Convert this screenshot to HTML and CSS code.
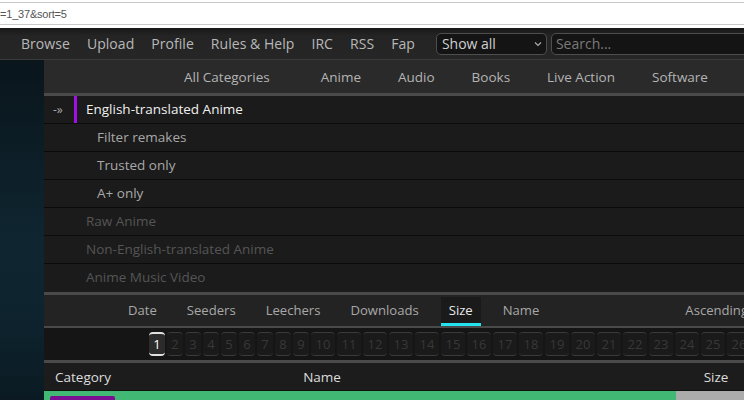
FILE: index.html
```html
<!DOCTYPE html>
<html>
<head>
<meta charset="utf-8">
<link rel="stylesheet" href="styles.css">
</head>
<body>
<div class="urlbar"><span class="url">=1_37&amp;sort=5</span></div>
<nav class="topnav">
  <a>Browse</a><a>Upload</a><a>Profile</a><a>Rules &amp; Help</a><a>IRC</a><a>RSS</a><a>Fap</a>
  <div class="select"><span>Show all</span>
    <svg class="chev" width="8" height="6" viewBox="0 0 8 6"><path d="M1 1.5 L4 4.5 L7 1.5" fill="none" stroke="#aaa" stroke-width="1.2"/></svg>
  </div>
  <div class="search">Search...</div>
</nav>
<div class="page">
  <aside class="side"></aside>
  <main class="panel">
    <div class="cats">
      <a class="allcat">All Categories</a><a>Anime</a><a>Audio</a><a>Books</a><a>Live Action</a><a>Software</a>
    </div>
    <ul class="subcats">
      <li class="active"><span class="arrow">-»</span><span class="bar"></span><span>English-translated Anime</span></li>
      <li class="filter">Filter remakes</li>
      <li class="filter">Trusted only</li>
      <li class="filter">A+ only</li>
      <li class="off">Raw Anime</li>
      <li class="off">Non-English-translated Anime</li>
      <li class="off">Anime Music Video</li>
    </ul>
    <div class="sortbar">
      <a>Date</a><a>Seeders</a><a>Leechers</a><a>Downloads</a><a class="cur">Size</a><a>Name</a><a class="asc">Ascending</a>
    </div>
    <div class="pager">
      <span class="pg on">1</span><span class="pg">2</span><span class="pg">3</span><span class="pg">4</span><span class="pg">5</span><span class="pg">6</span><span class="pg">7</span><span class="pg">8</span><span class="pg">9</span><span class="pg w">10</span><span class="pg w">11</span><span class="pg w">12</span><span class="pg w">13</span><span class="pg w">14</span><span class="pg w">15</span><span class="pg w">16</span><span class="pg w">17</span><span class="pg w">18</span><span class="pg w">19</span><span class="pg w">20</span><span class="pg w">21</span><span class="pg w">22</span><span class="pg w">23</span><span class="pg w">24</span><span class="pg w">25</span><span class="pg w">26</span>
    </div>
    <div class="thead">
      <span class="c-cat">Category</span><span class="c-name">Name</span><span class="c-link"></span><span class="c-size">Size</span>
    </div>
    <div class="trow">
      <span class="c-cat"><span class="badge"></span></span><span class="c-name"></span><span class="c-link"></span><span class="c-size gray"></span>
    </div>
  </main>
</div>
</body>
</html>
```
FILE: styles.css
```css
* { box-sizing: border-box; }
html, body { margin: 0; padding: 0; }
body {
  width: 744px;
  height: 400px;
  overflow: hidden;
  background: #0d1c25;
  font-family: "Open Sans", "Noto Sans", sans-serif;
}
a { cursor: pointer; }

.urlbar {
  height: 28px;
  background: #fff;
  padding-top: 2px;
}
.url {
  display: flex;
  align-items: center;
  height: 23px;
  border-top: 1px solid #c8c8c8;
  border-bottom: 1px solid #c8c8c8;
  font-size: 11px;
  color: #555;
  font-family: "Liberation Sans", sans-serif;
  padding-left: 0;
  letter-spacing: -0.2px;
}

.topnav {
  height: 32px;
  background: linear-gradient(#181818, #242424 25%, #262626);
  border-bottom: 1px solid #3a3a3a;
  display: flex;
  align-items: center;
  padding-left: 21px;
  gap: 17px;
  white-space: nowrap;
}
.topnav a {
  color: #b8b8b8;
  font-size: 14px;
  letter-spacing: 0.05px;
}
.select {
  margin-left: 4px;
  width: 111px;
  height: 22px;
  border: 1px solid #4e4e4e;
  border-radius: 5px;
  background: #141414;
  display: flex;
  align-items: center;
  justify-content: space-between;
  padding: 0 4px 0 5px;
  color: #d0d0d0;
  font-size: 14px;
}
.search {
  margin-left: -13px;
  flex: 1;
  margin-right: -20px;
  height: 22px;
  border: 1px solid #4e4e4e;
  border-radius: 5px;
  background: #141414;
  color: #7a7a7a;
  font-size: 14px;
  display: flex;
  align-items: center;
  padding-left: 4px;
}

.page {
  display: flex;
  height: 340px;
}
.side {
  width: 44px;
  flex: none;
  background: linear-gradient(#0a151c, #0f2631 55%, #0d222c 80%, #0b1a22);
}
.panel {
  width: 720px;
  flex: none;
  background: #1b1b1b;
}

.cats {
  height: 36px;
  background: #2a2a2a;
  border-bottom: 3px solid #4a4a4a;
  display: flex;
  align-items: center;
  padding-left: 140px;
  gap: 37px;
  white-space: nowrap;
}
.cats a {
  color: #b4b4b4;
  font-size: 13.5px;
}
.cats .allcat { margin-right: 14px; }

.subcats {
  list-style: none;
  margin: 0;
  padding: 0;
}
.subcats li {
  height: 28px;
  border-bottom: 1px solid #0b0b0b;
  display: flex;
  align-items: center;
  font-size: 13.5px;
  padding-left: 42px;
  padding-bottom: 1px;
  background: #1b1b1b;
}
.subcats .active {
  padding-left: 9px;
  color: #f0f0f0;
}
.arrow {
  color: #aaa;
  font-size: 12px;
  width: 21px;
}
.bar {
  width: 3px;
  height: 27px;
  margin-bottom: -1px;
  background: #a20ee6;
  margin-right: 9px;
}
.subcats .filter { padding-left: 53px; color: #a8a8a8; }
.subcats .off { color: #555; }
.subcats li:last-child { border-bottom: 3px solid #4a4a4a; height: 31px; padding-bottom: 3px; }

.sortbar {
  height: 33px;
  background: #232323;
  border-bottom: 2px solid #4a4a4a;
  display: flex;
  align-items: stretch;
  padding-left: 69px;
  padding-right: 16px;
  white-space: nowrap;
}
.sortbar a {
  color: #a8a8a8;
  font-size: 13.1px;
  display: flex;
  align-items: center;
  padding: 0 15px;
  margin-top: 2px;
  border-bottom: 3px solid transparent;
}
.sortbar a.cur {
  background: #1a1a1a;
  color: #e8e8e8;
  border-bottom-color: #25e3ee;
  padding: 0 8px;
  margin: 2px 7px 0;
}
.sortbar a.asc { margin-left: auto; padding-right: 0; }

.pager {
  height: 35px;
  background: #151515;
  border-bottom: 3px solid #4a4a4a;
  display: flex;
  align-items: center;
  padding-left: 105px;
  gap: 2px;
  white-space: nowrap;
}
.pg {
  flex: none;
  width: 16px;
  height: 24px;
  border-radius: 4px;
  border-top: 1px solid #3a3a3a;
  border-bottom: 1px solid #3a3a3a;
  background: #1a1a1a;
  color: #383838;
  font-size: 13px;
  display: flex;
  align-items: center;
  justify-content: center;
}
.pg.w { width: 24px; }
.pg.on {
  background: #2b2b2b;
  color: #fff;
  border-top: 2px solid #e0e0e0;
  border-bottom: 2px solid #e0e0e0;
}

.thead, .trow {
  display: grid;
  grid-template-columns: 77px 402px 153px 88px;
}
.thead {
  height: 28px;
  background: #1c1c1c;
  border-bottom: 1px solid #111;
  align-items: center;
  color: #dcdcdc;
  font-size: 13.5px;
}
.thead .c-cat { padding-left: 11px; }
.thead .c-name, .thead .c-size { text-align: center; }
.thead .c-size { padding-right: 8px; }
.trow {
  height: 20px;
  background: #41b975;
}
.trow .gray { background: #ababab; }
.badge {
  display: block;
  margin: 5px 0 0 6px;
  width: 65px;
  height: 15px;
  border-radius: 2px;
  background: #7b0e92;
}
```
